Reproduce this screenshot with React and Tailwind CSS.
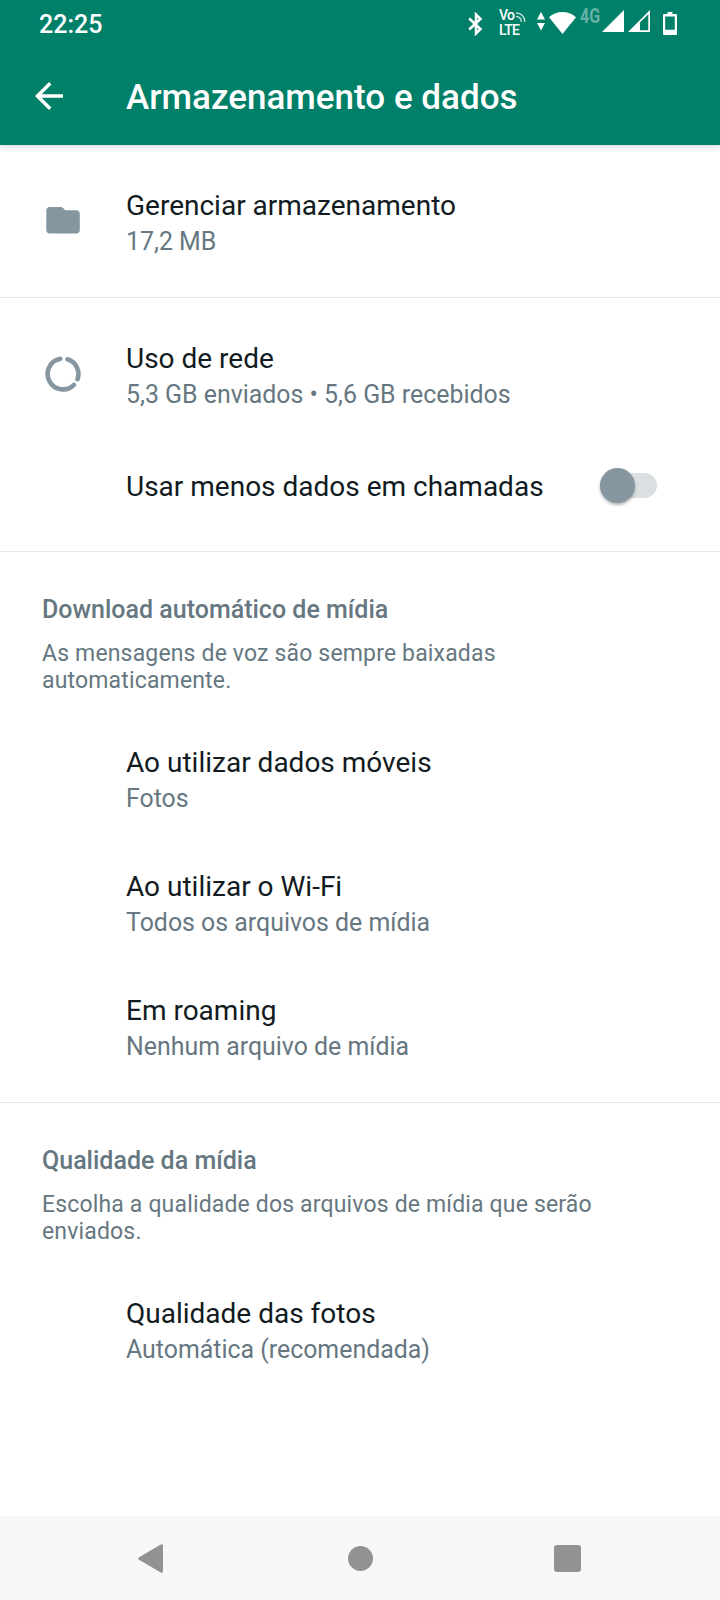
import React, { useState } from 'react';

const StatusBar = () => (
  <div className="flex h-[49px] items-start pl-[39px] text-white">
    <span className="mt-[7px] w-[429px] text-[25px] leading-[35px] font-medium">22:25</span>

    {/* Bluetooth */}
    <svg className="mt-[12px] h-[24px] w-[15px]" viewBox="0 0 15 24" fill="none" stroke="currentColor" strokeWidth="2.500">
      <path d="M1.200 6.500 12.500 17 8 21.500V2.500L12.500 7 1.200 17.500" />
    </svg>

    {/* VoLTE */}
    <div className="mt-[8px] ml-[16px] w-[38px] text-[14px] leading-[15px] font-medium tracking-[-0.7px]">
      <div className="flex items-start">
        <span>Vo</span>
        <svg className="mt-[4px] ml-[2px] h-[10px] w-[10px]" viewBox="0 0 10 10" fill="none" stroke="currentColor" strokeWidth="1.400">
          <path d="M0 1a8.500 8.500 0 0 1 8.800 9M0 4.500a5 5 0 0 1 5.200 5.500" opacity=".75" />
        </svg>
      </div>
      <div>LTE</div>
    </div>

    {/* Data activity */}
    <svg className="mt-[12px] h-[19px] w-[8px]" viewBox="0 0 8 19" fill="currentColor">
      <path d="M4 0 8 7.500H0zM4 18.500 0 11h8z" />
    </svg>
    <svg className="mt-[12px] ml-[4px] h-[22px] w-[27px]" viewBox="0 0 27 22" fill="currentColor">
      <path d="M13.500 22 0 5.200C3.500 2 8 0 13.500 0S23.500 2 27 5.200z" />
    </svg>
    <span className="mt-[5px] ml-[4px] w-[22px] origin-left scale-x-[0.8] text-[20px] leading-[22px] font-bold text-[#66b3a5]">4G</span>

    {/* Signal */}
    <svg className="mt-[10px] h-[22px] w-[22px]" viewBox="0 0 22 22" fill="currentColor">
      <path d="M22 0v22H0z" />
    </svg>
    <svg className="mt-[10px] ml-[4px] h-[22px] w-[22px]" viewBox="0 0 22 22" fill="currentColor" fillRule="evenodd">
      <path d="M22 0v22H0zM20.300 4.200 12 12.300v8h8.300z" />
    </svg>

    {/* Battery */}
    <svg className="mt-[12px] ml-[13px] h-[23px] w-[14px]" viewBox="0 0 14 23" fill="currentColor" fillRule="evenodd">
      <path d="M4.500 0h5v2H13a1 1 0 0 1 1 1v19a1 1 0 0 1-1 1H1a1 1 0 0 1-1-1V3a1 1 0 0 1 1-1h3.500zM2.200 4.500v13.200h9.600V4.500z" />
    </svg>
  </div>
);

const FolderIcon = () => (
  <svg className="mt-[19px] ml-[4px] h-[27px] w-[34px] text-[#8696a0]" viewBox="-0.300 0 34 27" fill="currentColor">
    <path d="M3.300 0h11.200c.8 0 1.500.3 2 .8L19 3.300h11.200c1.800 0 3.300 1.500 3.300 3.300v16.700c0 1.800-1.500 3.300-3.300 3.300H3.300C1.500 26.600 0 25.100 0 23.300v-20C0 1.500 1.500 0 3.300 0z" />
  </svg>
);

const UsageIcon = () => (
  <svg className="mt-[15px] ml-[3px] h-[36px] w-[36px] text-[#8696a0]" viewBox="-18 -18 36 36" fill="none" stroke="currentColor" strokeWidth="4.600" strokeLinecap="round">
    <path d="M4.500-14.700A15.400 15.400 0 0 1 14.500 5.200" />
    <path d="M-2.700-15.160A15.400 15.400 0 1 0 10.900 10.900" />
  </svg>
);

const Row = ({ title, subtitle, icon }) => (
  <div className="flex">
    <div className="w-[84px] shrink-0">{icon}</div>
    <div>
      <div className="text-[28px] leading-[36px] text-[#111b21]">{title}</div>
      <div className="text-[24.9px] leading-[36px] text-[#667781]">{subtitle}</div>
    </div>
  </div>
);

const SectionHeader = ({ title, text }) => (
  <div className="mb-[51px]">
    <h2 className="text-[25px] leading-[36px] font-medium text-[#667781]">{title}</h2>
    <p className="mt-[12px] w-[600px] text-[23px] leading-[27px] tracking-[0.16px] text-[#667781]">{text}</p>
  </div>
);

const App = () => {
  const [lessData, setLessData] = useState(false);

  return (
    <div className="flex h-[1600px] w-[720px] flex-col overflow-hidden bg-white font-['Roboto',sans-serif]">
      <header className="relative h-[145px] shrink-0 bg-[#008069] shadow-[0_1px_7px_rgba(0,0,0,0.18)]">
        <StatusBar />
        <div className="flex h-[94px] items-center pl-[28px] text-white">
          <svg className="h-[42px] w-[42px]" viewBox="0 0 24 24" fill="currentColor">
            <path d="M20 11H7.830l5.590-5.590L12 4l-8 8 8 8 1.410-1.410L7.830 13H20v-2z" />
          </svg>
          <h1 className="mt-[4px] ml-[56px] text-[35px] leading-[42px] font-medium">Armazenamento e dados</h1>
        </div>
      </header>

      <main className="flex-1">
        <section className="h-[153px] border-b border-[#e9e9e9] px-[42px] pt-[43px]">
          <Row title="Gerenciar armazenamento" subtitle="17,2 MB" icon={<FolderIcon />} />
        </section>

        <section className="h-[254px] border-b border-[#e9e9e9] px-[42px] pt-[43px]">
          <Row title="Uso de rede" subtitle="5,3 GB enviados • 5,6 GB recebidos" icon={<UsageIcon />} />
          <div className="mt-[56px] flex h-[36px] items-start justify-between pr-[21px] pl-[84px]">
            <span className="text-[28px] leading-[36px] text-[#111b21]">Usar menos dados em chamadas</span>
            <button
              role="switch"
              aria-checked={lessData}
              onClick={() => setLessData(!lessData)}
              className="mt-[4px] flex h-[25px] w-[57px] items-center rounded-full bg-[#dadfe2]"
            >
              <span className="h-[35px] w-[35px] shrink-0 rounded-full bg-[#8696a0] shadow-[0_2px_3px_rgba(0,0,0,0.3)]" />
            </button>
          </div>
        </section>

        <section className="h-[551px] border-b border-[#e9e9e9] px-[42px] pt-[40px]">
          <SectionHeader
            title="Download automático de mídia"
            text="As mensagens de voz são sempre baixadas automaticamente."
          />
          <div className="flex flex-col gap-[52px]">
            <Row title="Ao utilizar dados móveis" subtitle="Fotos" />
            <Row title="Ao utilizar o Wi-Fi" subtitle="Todos os arquivos de mídia" />
            <Row title="Em roaming" subtitle="Nenhum arquivo de mídia" />
          </div>
        </section>

        <section className="px-[42px] pt-[40px]">
          <SectionHeader
            title="Qualidade da mídia"
            text="Escolha a qualidade dos arquivos de mídia que serão enviados."
          />
          <Row title="Qualidade das fotos" subtitle="Automática (recomendada)" />
        </section>
      </main>

      {/* Android navigation */}
      <nav className="flex h-[84px] shrink-0 items-center bg-[#f7f8fa] pl-[138px] text-[#909391]">
        <svg className="h-[29px] w-[25px]" viewBox="0 0 25 29" fill="currentColor" stroke="currentColor" strokeWidth="3" strokeLinejoin="round">
          <path d="M23.500 1.800v25.400L1.800 14.500z" />
        </svg>
        <div className="ml-[185px] h-[25px] w-[25px] rounded-full bg-[#909391]" />
        <div className="ml-[181px] h-[27px] w-[27px] rounded-[3px] bg-[#909391]" />
      </nav>
    </div>
  );
};

export default App;
